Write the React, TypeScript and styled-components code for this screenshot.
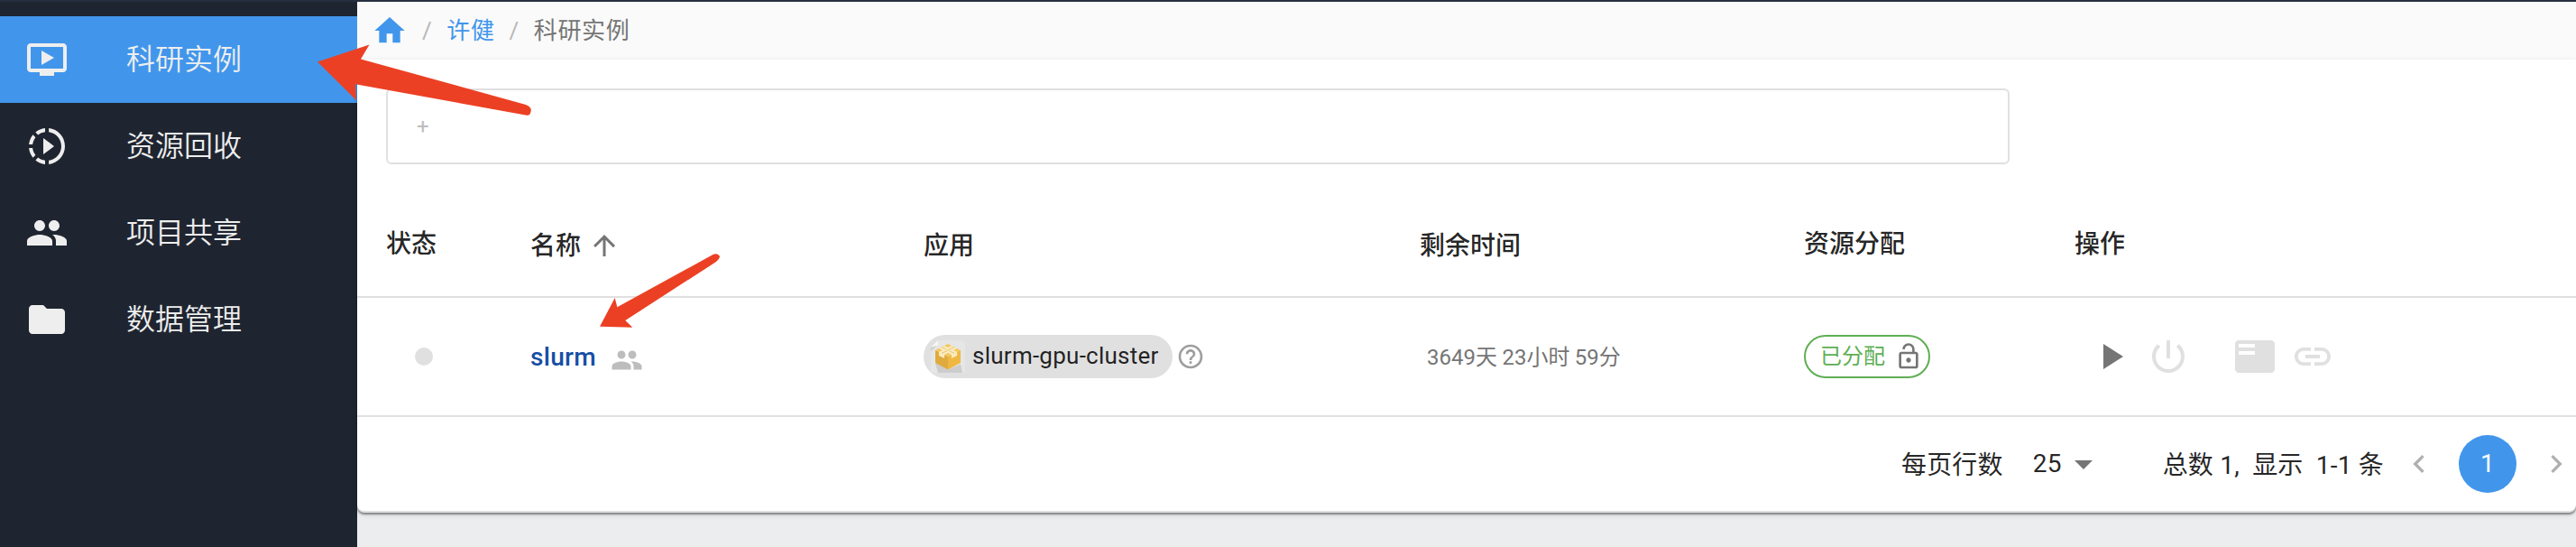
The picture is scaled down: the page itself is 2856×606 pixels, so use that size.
import React from 'react';
import styled, { createGlobalStyle, css } from 'styled-components';

const GlobalStyle = createGlobalStyle`
  *, *::before, *::after { box-sizing: border-box; }
  body {
    margin: 0;
    background: #ecedef;
    font-family: Roboto, "Noto Sans CJK SC", sans-serif;
    color: rgba(0, 0, 0, 0.87);
    overflow: hidden;
  }
`;

const paths = {
  video:
    'M21 3H3c-1.11 0-2 .89-2 2v12c0 1.1.89 2 2 2h5v2h8v-2h5c1.1 0 1.99-.9 1.99-2L23 5c0-1.11-.9-2-2-2zm0 14H3V5h18v12zm-5-6l-7 4V7z',
  slowMotion:
    'M13.05 9.79L10 7.5v9l3.05-2.29L16 12zm0 0L10 7.5v9l3.05-2.29L16 12zm0 0L10 7.5v9l3.05-2.29L16 12zM11 4.07V2.05c-2.01.2-3.84 1-5.32 2.21L7.1 5.69c1.11-.86 2.44-1.44 3.9-1.62zM5.69 7.1L4.26 5.68C3.05 7.16 2.25 8.99 2.05 11h2.02c.18-1.46.76-2.79 1.62-3.9zM4.07 13H2.05c.2 2.01 1 3.84 2.21 5.32l1.43-1.43c-.86-1.1-1.44-2.43-1.62-3.89zm1.61 6.74C7.16 20.95 9 21.75 11 21.95v-2.02c-1.46-.18-2.79-.76-3.9-1.62l-1.42 1.43zM22 12c0 5.16-3.92 9.42-8.95 9.95v-2.02C16.97 19.41 20 16.05 20 12s-3.03-7.41-6.95-7.93V2.05C18.08 2.58 22 6.84 22 12z',
  people:
    'M16 11c1.66 0 2.99-1.34 2.99-3S17.66 5 16 5c-1.66 0-3 1.34-3 3s1.34 3 3 3zm-8 0c1.66 0 2.99-1.34 2.99-3S9.66 5 8 5C6.34 5 5 6.34 5 8s1.34 3 3 3zm0 2c-2.33 0-7 1.17-7 3.5V19h14v-2.5c0-2.33-4.67-3.5-7-3.5zm8 0c-.29 0-.62.02-.97.05 1.16.84 1.97 1.97 1.97 3.45V19h6v-2.5c0-2.33-4.67-3.5-7-3.5z',
  folder: 'M10 4H4c-1.1 0-1.99.9-1.99 2L2 18c0 1.1.9 2 2 2h16c1.1 0 2-.9 2-2V8c0-1.1-.9-2-2-2h-8l-2-2z',
  home: 'M10 20v-6h4v6h5v-8h3L12 3 2 12h3v8z',
  arrowUp: 'M4 12l1.41 1.41L11 7.83V20h2V7.83l5.58 5.59L20 12l-8-8-8 8z',
  help: 'M11 18h2v-2h-2v2zm1-16C6.48 2 2 6.48 2 12s4.48 10 10 10 10-4.48 10-10S17.52 2 12 2zm0 18c-4.41 0-8-3.59-8-8s3.59-8 8-8 8 3.59 8 8-3.59 8-8 8zm0-14c-2.21 0-4 1.79-4 4h2c0-1.1.9-2 2-2s2 .9 2 2c0 2-3 1.75-3 5h2c0-2.25 3-2.5 3-5 0-2.21-1.79-4-4-4z',
  lockOpen:
    'M12 17c1.1 0 2-.9 2-2s-.9-2-2-2-2 .9-2 2 .9 2 2 2zm6-9h-1V6c0-2.76-2.24-5-5-5S7 3.24 7 6h1.9c0-1.71 1.39-3.1 3.1-3.1 1.71 0 3.1 1.39 3.1 3.1v2H6c-1.1 0-2 .9-2 2v10c0 1.1.9 2 2 2h12c1.1 0 2-.9 2-2V10c0-1.1-.9-2-2-2zm0 12H6V10h12v10z',
  play: 'M8 5v14l11-7z',
  power:
    'M13 3h-2v10h2V3zm4.83 2.17l-1.42 1.42C17.99 7.86 19 9.81 19 12c0 3.87-3.13 7-7 7s-7-3.13-7-7c0-2.19 1.01-4.14 2.58-5.42L6.17 5.17C4.23 6.82 3 9.26 3 12c0 4.97 4.03 9 9 9s9-4.03 9-9c0-2.74-1.23-5.18-3.17-6.83z',
  console:
    'M21 3H3c-1.1 0-2 .9-2 2v14c0 1.1.9 2 2 2h18c1.1 0 2-.9 2-2V5c0-1.1-.9-2-2-2zm-9 8H3V9h9v2zm0-4H3V5h9v2z',
  link: 'M3.9 12c0-1.71 1.39-3.1 3.1-3.1h4V7H7c-2.76 0-5 2.24-5 5s2.24 5 5 5h4v-1.9H7c-1.71 0-3.1-1.39-3.1-3.1zM8 13h8v-2H8v2zm9-6h-4v1.9h4c1.71 0 3.1 1.39 3.1 3.1s-1.39 3.1-3.1 3.1h-4V17h4c2.76 0 5-2.24 5-5s-2.24-5-5-5z',
  dropDown: 'M7 10l5 5 5-5z',
  chevronLeft: 'M15.41 7.41L14 6l-6 6 6 6 1.41-1.41L10.83 12z',
  chevronRight: 'M10 6L8.59 7.41 13.17 12l-4.58 4.59L10 18l6-6z',
};

type IconName = keyof typeof paths;

const IconSvg = styled.svg<{ $size: number }>`
  display: block;
  flex: none;
  width: ${(p) => p.$size}px;
  height: ${(p) => p.$size}px;
  fill: currentColor;
`;

const Icon = ({ name, size = 48 }: { name: IconName; size?: number }) => (
  <IconSvg $size={size} viewBox="0 0 24 24" aria-hidden="true">
    <path d={paths[name]} />
  </IconSvg>
);

const Page = styled.div`
  position: relative;
  display: flex;
  width: 2856px;
  height: 606px;
  border-top: 2px solid #252f3e;
`;

const Sidebar = styled.nav`
  flex: none;
  width: 396px;
  padding-top: 16px;
  background: #1f2530;
`;

const NavItem = styled.a<{ $active?: boolean }>`
  display: flex;
  align-items: center;
  gap: 64px;
  height: 96px;
  padding-left: 28px;
  color: #eeeeee;
  font-size: 32px;
  font-weight: 350;
  line-height: 48px;
  background: ${(p) => (p.$active ? '#4196ec' : 'transparent')};
`;

const Main = styled.main`
  flex: 1;
  min-width: 0;
`;

const Breadcrumbs = styled.nav`
  display: flex;
  align-items: center;
  height: 64px;
  padding-left: 16px;
  background: #fafafa;
  font-size: 26px;
  letter-spacing: 0.6px;
  line-height: 40px;
  color: #757575;
`;

const HomeLink = styled.a`
  color: #4196ec;
`;

const Slash = styled.span`
  margin: 0 16px;
  color: #b8b8b8;
`;

const Crumb = styled.span<{ $link?: boolean }>`
  color: ${(p) => (p.$link ? '#4196ec' : '#757575')};
`;

const Card = styled.section`
  height: 502px;
  padding-top: 32px;
  background: #fff;
  border-bottom: 2px solid #e0e0e0;
  border-radius: 0 0 8px 8px;
  box-shadow: 0 2px 2px rgba(0, 0, 0, 0.4), 0 2px 6px rgba(0, 0, 0, 0.12);
`;

const SearchBox = styled.div`
  width: 1800px;
  height: 84px;
  margin-left: 32px;
  padding: 22px 32px;
  border: 2px solid #e0e0e0;
  border-radius: 6px;
  color: #bdbdbd;
  font-size: 24px;
  line-height: 36px;
`;

const rowGrid = css`
  display: grid;
  grid-template-columns: 160px 436px 550px 426px 300px 1fr;
  align-items: center;
  padding-left: 32px;
  border-bottom: 2px solid #e0e0e0;
`;

const HeaderRow = styled.div`
  ${rowGrid}
  height: 148px;
  padding-top: 32px;
  font-size: 28px;
  font-weight: 500;
  line-height: 40px;
`;

const HeaderCell = styled.div<{ $lower?: boolean }>`
  display: flex;
  align-items: center;
  padding-top: ${(p) => (p.$lower ? 4 : 0)}px;
`;

const SortMark = styled.span`
  margin: -2px 0 0 8px;
  color: #757575;
`;

const DataRow = styled.div`
  ${rowGrid}
  height: 132px;
`;

const Cell = styled.div`
  display: flex;
  align-items: center;
`;

const StatusDot = styled.span`
  width: 20px;
  height: 20px;
  margin-left: 32px;
  border-radius: 50%;
  background: #e0e0e0;
`;

const InstanceLink = styled.a`
  padding-top: 1px;
  color: #174ea6;
  font-size: 28px;
  font-weight: 500;
  letter-spacing: 0.3px;
  line-height: 40px;
`;

const SharedMark = styled.span`
  margin: 8px 0 0 16px;
  color: #bdbdbd;
`;

const AppChip = styled.span`
  display: flex;
  align-items: center;
  gap: 8px;
  width: 276px;
  height: 48px;
  padding-left: 8px;
  border-radius: 24px;
  background: #e0e0e0;
  font-size: 26px;
  letter-spacing: 0.25px;
  white-space: nowrap;
`;

const AppName = styled.span`
  padding-bottom: 2px;
`;

const HelpMark = styled.span`
  margin-left: 4px;
  color: #9e9e9e;
`;

const Remaining = styled.span`
  padding: 2px 0 0 8px;
  color: #757575;
  font-size: 24px;
  line-height: 36px;
  word-spacing: -0.5px;
  white-space: nowrap;
`;

const StateChip = styled.span`
  display: flex;
  align-items: center;
  gap: 10px;
  width: 140px;
  height: 48px;
  padding-left: 16px;
  border: 2px solid #5fae54;
  border-radius: 24px;
  color: #5fae54;
  font-size: 24px;
  line-height: 36px;
`;

const LockMark = styled.span`
  color: #757575;
`;

const Actions = styled.div`
  display: flex;
  gap: 16px;
  padding-left: 16px;
`;

const ActionButton = styled.span<{ $enabled?: boolean; $apart?: boolean }>`
  margin-left: ${(p) => (p.$apart ? 32 : 0)}px;
  color: ${(p) => (p.$enabled ? '#757575' : '#e0e0e0')};
`;

const Pagination = styled.footer`
  display: flex;
  align-items: center;
  justify-content: flex-end;
  height: 104px;
  padding-right: 2px;
  font-size: 28px;
  line-height: 40px;
  letter-spacing: 0.2px;
  white-space: pre;
`;

const PageSize = styled.span`
  display: flex;
  align-items: center;
  margin: 0 64px 0 33px;
`;

const FooterText = styled.span`
  padding-top: 4px;
`;

const Caret = styled.span`
  width: 48px;
  color: #757575;
`;

const PageStep = styled.span`
  color: #b0b0b0;
`;

const PreviousStep = styled(PageStep)`
  margin-left: 19px;
`;

const CurrentPage = styled.span`
  display: flex;
  align-items: center;
  justify-content: center;
  width: 64px;
  height: 64px;
  margin: 0 24px;
  border-radius: 50%;
  background: #4196ec;
  color: #fff;
`;

const Annotations = styled.svg`
  position: absolute;
  left: 0;
  top: -2px;
  fill: #ec4024;
  pointer-events: none;
`;

const PackageSvg = styled.svg`
  display: block;
  flex: none;
  width: 38px;
  height: 36px;
`;

const PackageIcon = () => (
  <PackageSvg viewBox="0 0 38 36" aria-hidden="true">
    <path d="M8 0h26a4 4 0 0 1 4 4v32H0V8z" fill="#e6e6e6" />
    <path d="M0 8L8 0v5q0 1-1 1z" fill="#f6f6f6" />
    <path d="M0 8l7-2-7 6z" fill="#d0d0d0" />
    <path d="M5 25l14 7.5 14-6 2 9.500H8z" fill="#cccccc" />
    <path d="M5 11l14 7v14.500L5 25z" fill="#dfaa3e" />
    <path d="M33 11l-14 7v14.500L33 25z" fill="#f0b842" />
    <path d="M19 4l14 7-14 7-14-7z" fill="#f5c65c" />
    <path d="M15.1 6l14 7v4l-6.200 3.100V16l-14-7z" fill="#faebc0" />
    <path d="M22.900 6l6.200 3-14 7v4.100L8.900 17v-4z" fill="#faebc0" />
    <path d="M12 14.500l14-7M12 7.500l5 2.500M21 12l5 2.500" stroke="#e3b95c" strokeWidth="0.8" fill="none" />
  </PackageSvg>
);

const navItems: { icon: IconName; label: string; active?: boolean }[] = [
  { icon: 'video', label: '科研实例', active: true },
  { icon: 'slowMotion', label: '资源回收' },
  { icon: 'people', label: '项目共享' },
  { icon: 'folder', label: '数据管理' },
];

export default function App() {
  return (
    <>
      <GlobalStyle />
      <Page>
        <Sidebar>
          {navItems.map((item) => (
            <NavItem key={item.label} $active={item.active}>
              <Icon name={item.icon} />
              <span>{item.label}</span>
            </NavItem>
          ))}
        </Sidebar>
        <Main>
          <Breadcrumbs>
            <HomeLink>
              <Icon name="home" size={40} />
            </HomeLink>
            <Slash>/</Slash>
            <Crumb $link>许健</Crumb>
            <Slash>/</Slash>
            <Crumb>科研实例</Crumb>
          </Breadcrumbs>
          <Card>
            <SearchBox>+</SearchBox>
            <HeaderRow>
              <HeaderCell>状态</HeaderCell>
              <HeaderCell $lower>
                名称
                <SortMark>
                  <Icon name="arrowUp" size={36} />
                </SortMark>
              </HeaderCell>
              <HeaderCell $lower>应用</HeaderCell>
              <HeaderCell $lower>剩余时间</HeaderCell>
              <HeaderCell>资源分配</HeaderCell>
              <HeaderCell>操作</HeaderCell>
            </HeaderRow>
            <DataRow>
              <Cell>
                <StatusDot />
              </Cell>
              <Cell>
                <InstanceLink>slurm</InstanceLink>
                <SharedMark>
                  <Icon name="people" size={36} />
                </SharedMark>
              </Cell>
              <Cell>
                <AppChip>
                  <PackageIcon />
                  <AppName>slurm-gpu-cluster</AppName>
                </AppChip>
                <HelpMark>
                  <Icon name="help" size={32} />
                </HelpMark>
              </Cell>
              <Cell>
                <Remaining>3649天 23小时 59分</Remaining>
              </Cell>
              <Cell>
                <StateChip>
                  已分配
                  <LockMark>
                    <Icon name="lockOpen" size={32} />
                  </LockMark>
                </StateChip>
              </Cell>
              <Actions>
                <ActionButton $enabled>
                  <Icon name="play" />
                </ActionButton>
                <ActionButton>
                  <Icon name="power" />
                </ActionButton>
                <ActionButton $apart>
                  <Icon name="console" />
                </ActionButton>
                <ActionButton>
                  <Icon name="link" />
                </ActionButton>
              </Actions>
            </DataRow>
            <Pagination>
              <FooterText>每页行数</FooterText>
              <PageSize>
                <span>25</span>
                <Caret>
                  <Icon name="dropDown" />
                </Caret>
              </PageSize>
              <FooterText>{'总数 1,  显示  1-1 条'}</FooterText>
              <PreviousStep>
                <Icon name="chevronLeft" size={40} />
              </PreviousStep>
              <CurrentPage>1</CurrentPage>
              <PageStep>
                <Icon name="chevronRight" size={40} />
              </PageStep>
            </Pagination>
          </Card>
        </Main>
        <Annotations width="820" height="380" viewBox="0 0 820 380" aria-hidden="true">
          <path d="M352 68.5L409.5 49.5 400 65.5 583 116Q589.5 119 588.7 122.500Q588 128.500 584 127.800L394 93.300 395 111Z" />
          <path d="M665 361.700L681.700 330 684.300 340.300 791 281.700Q796 280 798 284Q798 286.500 794 290L693.300 355 701.300 362.700Z" />
        </Annotations>
      </Page>
    </>
  );
}
